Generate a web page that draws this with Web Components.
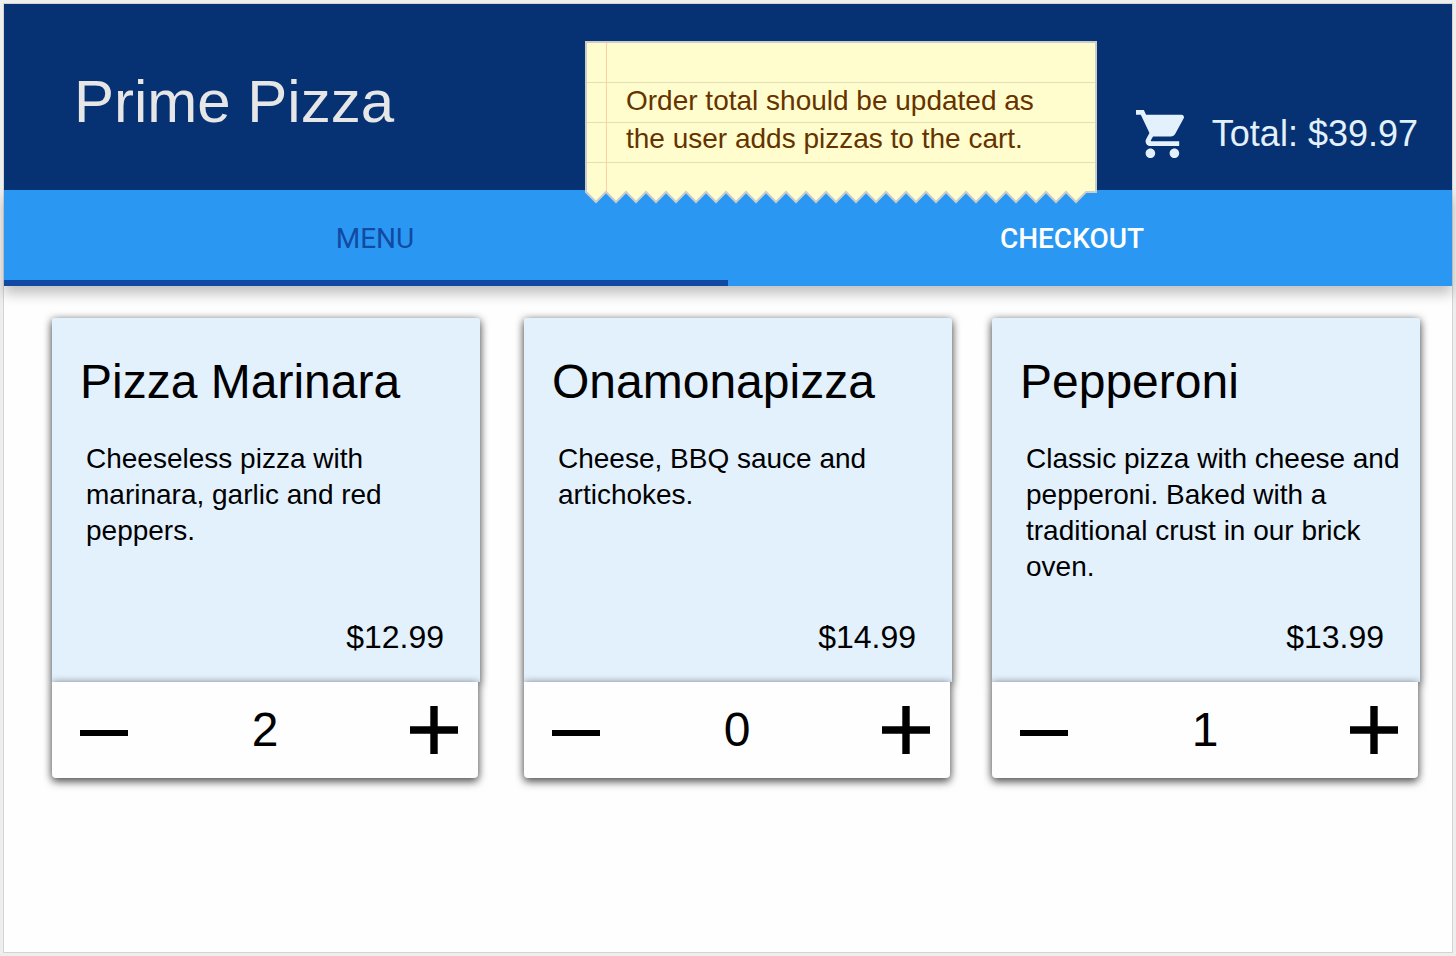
<!DOCTYPE html>
<html lang="en">
<head>
<meta charset="utf-8">
<meta name="viewport" content="width=device-width, initial-scale=1">
<title>Prime Pizza</title>
<style>
  html { background: #eee; }
  body { margin: 0; font-family: "Liberation Sans", Arial, Helvetica, sans-serif; color: #000; }
</style>
</head>
<body>
<pizza-app>
  <shop-header slot="header" brand="Prime Pizza" total="$39.97">
    <paper-note slot="note">Order total should be updated as the user adds pizzas to the cart.</paper-note>
  </shop-header>
  <shop-tabs slot="tabs"></shop-tabs>
  <pizza-card name="Pizza Marinara" price="$12.99" count="2">Cheeseless pizza with marinara, garlic and red peppers.</pizza-card>
  <pizza-card name="Onamonapizza" price="$14.99" count="0">Cheese, BBQ sauce and artichokes.</pizza-card>
  <pizza-card name="Pepperoni" price="$13.99" count="1">Classic pizza with cheese and pepperoni. Baked with a traditional crust in our brick oven.</pizza-card>
</pizza-app>

<script>
class ShadowElement extends HTMLElement {
  constructor() {
    super();
    this.attachShadow({ mode: "open" });
  }
  connectedCallback() {
    this.shadowRoot.innerHTML = this.render();
  }
}

customElements.define("pizza-app", class extends ShadowElement {
  render() {
    return `
      <style>
        :host { display: flex; min-height: 100vh; box-sizing: border-box; padding: 3px; }
        .frame { flex: 1; min-width: 0; border: 1px solid #d4d4d4; background: #fefefe; }
        main { display: flex; align-items: flex-start; gap: 40px; padding: 32px 32px 32px 48px; }
        ::slotted(pizza-card) { flex: 1; min-width: 0; }
        ::slotted(pizza-card:first-of-type) { margin-right: 4px; }
      </style>
      <div class="frame">
        <slot name="header"></slot>
        <slot name="tabs"></slot>
        <main><slot></slot></main>
      </div>`;
  }
});

customElements.define("shop-header", class extends ShadowElement {
  render() {
    return `
      <style>
        :host { display: block; }
        header {
          position: relative; z-index: 2; box-sizing: border-box; min-height: 186px;
          display: flex; justify-content: space-between; align-items: flex-end;
          padding: 61px 34px 32px 70px; background: #063173;
        }
        h1 { align-self: flex-start; margin: 0; font-size: 60px; line-height: 74px; font-weight: 400; color: #e6e6e6; }
        .cart { display: flex; align-items: center; gap: 28px; font-size: 36px; line-height: 48px; color: #e3f1fd; }
        svg { width: 48px; height: 48px; fill: currentColor; }
        ::slotted(paper-note) { position: absolute; top: 37px; right: 355px; }
      </style>
      <header>
        <h1>${this.getAttribute("brand")}</h1>
        <slot name="note"></slot>
        <div class="cart">
          <svg viewBox="1 2 20 20" aria-hidden="true"><path d="M7 18c-1.1 0-1.99.9-1.99 2S5.9 22 7 22s2-.9 2-2-.9-2-2-2zM1 2v2h2l3.6 7.59-1.35 2.45c-.16.28-.25.61-.25.96 0 1.1.9 2 2 2h12v-2H7.42c-.14 0-.25-.11-.25-.25l.03-.12.9-1.63h7.45c.75 0 1.41-.41 1.75-1.03l3.58-6.49c.08-.14.12-.31.12-.48 0-.55-.45-1-1-1H5.21l-.94-2H1zm16 16c-1.1 0-1.99.9-1.99 2s.89 2 1.99 2 2-.9 2-2-.9-2-2-2z"/></svg>
          <span>Total: ${this.getAttribute("total")}</span>
        </div>
      </header>`;
  }
});

customElements.define("paper-note", class extends ShadowElement {
  render() {
    // Torn edge: 25 teeth, 20px apart, then a short flat end.
    let edge = "M1 1H511V151H501";
    for (let x = 501; x > 1; x -= 20) edge += `L${x - 10} 161L${x - 20} 151`;
    return `
      <style>
        :host { display: block; width: 512px; box-sizing: border-box; padding: 41px 40px 47px 41px; }
        svg { position: absolute; top: 0; left: 0; width: 512px; height: 164px; }
        p { position: relative; margin: 0; font-size: 28px; line-height: 38px; color: #663300; }
      </style>
      <svg viewBox="0 0 512 164" fill="none" aria-hidden="true">
        <path d="${edge}Z" fill="#fffdcd"/>
        <path d="M2 41.5H510M2 81.5H510M2 121.5H510" stroke="#e2e0b9"/>
        <path d="M21.5 2V151" stroke="#ffcfa3"/>
        <path d="${edge}Z" stroke="#ccc" stroke-width="2"/>
      </svg>
      <p><slot></slot></p>`;
  }
});

customElements.define("shop-tabs", class extends ShadowElement {
  render() {
    return `
      <style>
        :host { display: block; }
        nav {
          position: relative; z-index: 1; display: grid; grid-template-columns: 1fr 1fr;
          background: #2a98f3; box-shadow: 0 8px 12px rgba(0,0,0,.24);
        }
        a {
          box-sizing: border-box; height: 96px; padding: 7px 36px 0 0; border-bottom: 6px solid transparent;
          font-family: Roboto, sans-serif; font-size: 28px; line-height: 83px; font-weight: 500;
          text-align: center; text-decoration: none; color: #fff;
        }
        a[aria-current] { padding: 7px 0 0 18px; font-weight: 400; color: #1249a2; border-color: #1249a2; }
      </style>
      <nav>
        <a href="#menu" aria-current="page">MENU</a>
        <a href="#checkout">CHECKOUT</a>
      </nav>`;
  }
});

customElements.define("pizza-card", class extends ShadowElement {
  connectedCallback() {
    super.connectedCallback();
    const count = this.shadowRoot.querySelector("output");
    const [less, more] = this.shadowRoot.querySelectorAll("button");
    less.onclick = () => { count.value = Math.max(0, +count.value - 1); };
    more.onclick = () => { count.value = +count.value + 1; };
  }
  render() {
    const name = this.getAttribute("name");
    return `
      <style>
        :host { display: block; --lift: 0 4px 8px rgba(0,0,0,.5), 0 1px 9px rgba(0,0,0,.4); }
        .info {
          display: flex; flex-direction: column; box-sizing: border-box; min-height: 364px;
          padding: 36px 12px 25px 28px; border-radius: 2px 2px 0 0; background: #e3f1fd; box-shadow: var(--lift);
        }
        h2 { margin: 0 0 31px; font-size: 48px; line-height: 56px; font-weight: 400; }
        p { margin: 0 0 0 6px; font-size: 28px; line-height: 36px; }
        .price { margin: auto 24px 0 0; font-size: 32px; line-height: 40px; text-align: right; }
        .stepper {
          position: relative; display: grid; grid-template-columns: 48px 1fr 48px; align-items: center;
          height: 96px; box-sizing: border-box; margin-right: 2px; padding: 0 20px 0 28px;
          border-radius: 0 0 4px 4px; background: #fefefe; box-shadow: var(--lift);
        }
        button { display: block; width: 48px; height: 48px; padding: 0; border: 0; background: none; color: inherit; cursor: pointer; }
        svg { display: block; width: 48px; height: 48px; fill: currentColor; }
        output { padding-right: 8px; font-size: 48px; line-height: 56px; text-align: center; }
      </style>
      <article>
        <div class="info">
          <h2>${name}</h2>
          <p><slot></slot></p>
          <div class="price">${this.getAttribute("price")}</div>
        </div>
        <div class="stepper">
          <button type="button" aria-label="Remove one ${name}"><svg viewBox="0 0 48 48"><path d="M0 24h48v6H0z"/></svg></button>
          <output aria-label="Quantity of ${name}">${this.getAttribute("count")}</output>
          <button type="button" aria-label="Add one ${name}"><svg viewBox="0 0 48 48"><path d="M20.3 0h7.4v20.3H48v7.4H27.7V48h-7.4V27.7H0v-7.4h20.3z"/></svg></button>
        </div>
      </article>`;
  }
});
</script>
</body>
</html>
